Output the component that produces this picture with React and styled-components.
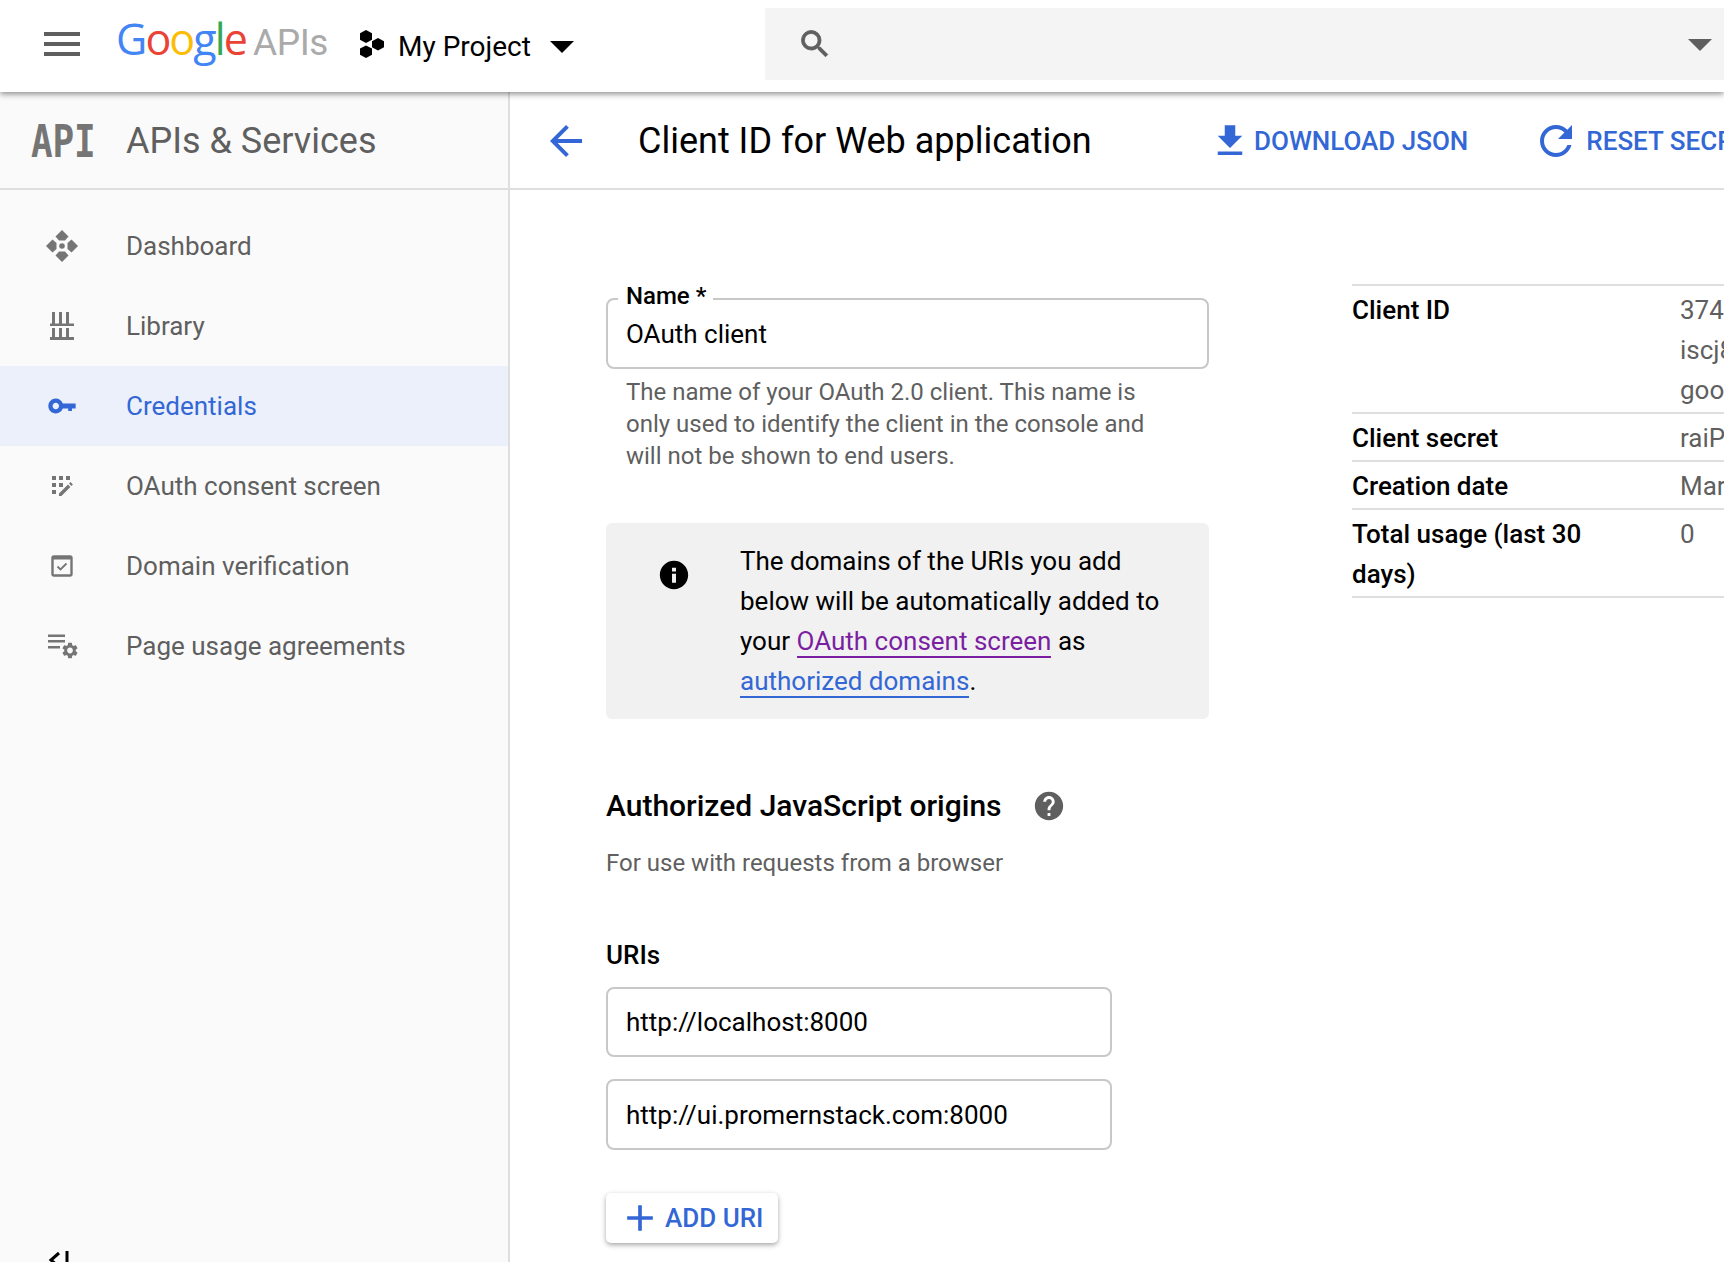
import React from "react"
import styled, { createGlobalStyle } from "styled-components"

const Global = createGlobalStyle`
  html, body {
    margin: 0;
    padding: 0;
    background: #fff;
    overflow: hidden;
  }
  * {
    box-sizing: border-box;
  }
`

const Page = styled.div`
  width: 1724px;
  height: 1262px;
  overflow: hidden;
  display: flex;
  flex-direction: column;
  font-family: Roboto, "Liberation Sans", sans-serif;
  font-size: 26px;
  color: #000;
`

const Header = styled.header`
  height: 92px;
  flex: none;
  display: flex;
  align-items: center;
  background: #fff;
  box-shadow: 0 2px 6px rgba(0, 0, 0, 0.45);
  position: relative;
  z-index: 2;
`

const Burger = styled.div`
  width: 36px;
  margin-left: 44px;
  display: flex;
  flex-direction: column;
  gap: 6px;
  margin-top: -4px;
  span {
    height: 4px;
    background: #5f5f5f;
  }
`

const Logo = styled.div`
  margin-left: 36px;
  margin-top: -15px;
  width: 213px;
  flex: none;
  display: flex;
  align-items: baseline;
  font-family: "Open Sans", sans-serif;
  font-size: 43px;
  letter-spacing: -1.9px;
  white-space: nowrap;
`

const Letter = styled.span`
  color: ${(p) => p.$c};
`

const LogoApis = styled.span`
  margin-left: 7px;
  color: #aaa;
  font-family: Roboto, sans-serif;
  font-weight: 400;
  font-size: 37px;
  letter-spacing: -0.4px;
`

const ProjectPicker = styled.div`
  width: 375px;
  flex: none;
  margin-left: 29px;
  display: flex;
  align-items: center;
  font-size: 28px;
  white-space: nowrap;
  svg {
    flex: none;
    margin-top: -5px;
  }
`

const ProjectName = styled.span`
  margin-left: 12px;
  margin-top: 1px;
`

const Caret = styled.i`
  flex: none;
  width: 0;
  height: 0;
  margin-left: ${(p) => p.$left || 0}px;
  margin-top: 2px;
  border-left: ${(p) => p.$size}px solid transparent;
  border-right: ${(p) => p.$size}px solid transparent;
  border-top: ${(p) => p.$size}px solid ${(p) => p.$color};
`

const Search = styled.div`
  margin-left: 32px;
  flex: 1;
  height: 72px;
  margin-top: -4px;
  background: #f4f4f4;
  display: flex;
  align-items: center;
  padding: 0 12px 0 32px;
  justify-content: space-between;
`

const Body = styled.div`
  flex: 1;
  display: flex;
  min-height: 0;
`

const Sidebar = styled.aside`
  width: 510px;
  flex: none;
  background: #fafafa;
  border-right: 2px solid #dedede;
  display: flex;
  flex-direction: column;
`

const SideTitle = styled.div`
  height: 98px;
  flex: none;
  border-bottom: 2px solid #dedede;
  display: flex;
  align-items: center;
  padding: 2px 0 0 31px;
  font-size: 36px;
  color: #5f5f5f;
`

const ApiMark = styled.span`
  width: 95px;
  flex: none;
  font-family: "DejaVu Sans Mono", monospace;
  font-weight: 700;
  font-size: 36px;
  letter-spacing: -0.2px;
  color: #757575;
  transform: scaleY(1.25);
  transform-origin: center;
`

const Nav = styled.nav`
  padding-top: 16px;
  display: flex;
  flex-direction: column;
`

const NavItem = styled.a`
  height: 80px;
  display: flex;
  align-items: center;
  padding-left: 44px;
  color: ${(p) => (p.$active ? "#3367d6" : "#5f5f5f")};
  background: ${(p) => (p.$active ? "#ebf0fb" : "transparent")};
  svg {
    width: 36px;
    height: 36px;
    flex: none;
    margin-right: 46px;
  }
`

const Collapse = styled.div`
  margin-top: auto;
  margin-bottom: -24px;
  padding-left: 48px;
  height: 36px;
  flex: none;
`

const Main = styled.main`
  flex: 1;
  min-width: 0;
  display: flex;
  flex-direction: column;
  background: #fff;
`

const Toolbar = styled.div`
  height: 98px;
  flex: none;
  border-bottom: 2px solid #dedede;
  display: flex;
  align-items: center;
  padding: 2px 0 0 32px;
  white-space: nowrap;
  overflow: hidden;
`

const Title = styled.h1`
  margin: 0 0 0 48px;
  width: 571px;
  flex: none;
  font-size: 36px;
  font-weight: 400;
`

const Action = styled.a`
  display: flex;
  align-items: center;
  gap: ${(p) => p.$gap}px;
  flex: none;
  margin-right: 64px;
  color: #3367d6;
  font-weight: 500;
`

const Content = styled.div`
  flex: 1;
  display: flex;
  padding-left: 96px;
  min-height: 0;
  overflow: hidden;
`

const Form = styled.div`
  width: 603px;
  flex: none;
  padding-top: 108px;
`

const Field = styled.div`
  position: relative;
`

const Legend = styled.label`
  position: absolute;
  left: 12px;
  top: -17px;
  padding: 0 7px 0 8px;
  background: #fff;
  font-size: 24px;
  font-weight: 500;
  line-height: 30px;
`

const Input = styled.input`
  display: block;
  width: ${(p) => p.$width}px;
  height: ${(p) => p.$height || 70}px;
  padding: 0 18px;
  border: 2px solid #c8c8c8;
  border-radius: 8px;
  font: inherit;
  color: #000;
  background: #fff;
  outline: none;
`

const Helper = styled.p`
  margin: 7px 0 0;
  padding: 0 60px 0 20px;
  font-size: 24px;
  line-height: 32px;
  color: #5f5f5f;
`

const InfoBox = styled.div`
  margin-top: 51px;
  height: 196px;
  background: #f1f1f1;
  border-radius: 6px;
  display: flex;
  padding: 18px 40px 0 51px;
  line-height: 40px;
  svg {
    flex: none;
    margin-top: 17px;
    margin-right: 49px;
  }
`

const Link = styled.a`
  color: ${(p) => (p.$visited ? "#7b1fa2" : "#3367d6")};
  border-bottom: 2px solid currentColor;
`

const SectionHead = styled.div`
  margin-top: 66px;
  display: flex;
  align-items: center;
  gap: 30px;
  height: 42px;
`

const SectionTitle = styled.h2`
  margin: -2px 0 0;
  font-size: 30px;
  font-weight: 500;
`

const SubText = styled.div`
  margin-top: 19px;
  font-size: 24px;
  line-height: 34px;
  color: #5f5f5f;
`

const FieldLabel = styled.div`
  margin-top: 58px;
  font-weight: 500;
  line-height: 34px;
`

const UriList = styled.div`
  margin-top: 15px;
  display: flex;
  flex-direction: column;
  gap: 22px;
`

const AddButton = styled.button`
  margin-top: 43px;
  width: 172px;
  height: 50px;
  display: flex;
  align-items: center;
  padding: 0 0 0 12px;
  gap: 3px;
  border: none;
  border-radius: 5px;
  background: #fff;
  color: #3367d6;
  font: inherit;
  font-weight: 500;
  box-shadow: 0 2px 5px rgba(0, 0, 0, 0.35);
`

const Details = styled.div`
  margin-left: 143px;
  margin-top: 94px;
  flex: none;
  width: 800px;
  align-self: flex-start;
  border-top: 2px solid #dedede;
`

const DetailRow = styled.div`
  display: grid;
  grid-template-columns: 328px 1fr;
  border-bottom: 2px solid #dedede;
  padding: 4px 0 2px;
  line-height: 40px;
`

const DetailLabel = styled.div`
  font-weight: 500;
  padding-right: 60px;
`

const DetailValue = styled.div`
  color: #5f5f5f;
`

const Svg = styled.svg`
  flex: none;
  display: block;
`

const Icon = ({ size = 24, color = "currentColor", d, bold }) => (
  <Svg width={size} height={size} viewBox="0 0 24 24" fill={color} stroke={bold ? color : "none"} strokeWidth={bold || 0}>
    <path d={d} />
  </Svg>
)

const paths = {
  search: "M15.5 14h-.79l-.28-.27A6.471 6.471 0 0 0 16 9.5 6.5 6.5 0 1 0 9.5 16c1.61 0 3.09-.59 4.23-1.57l.27.28v.79l5 4.99L20.49 19l-4.99-5zm-6 0C7.01 14 5 11.99 5 9.5S7.01 5 9.5 5 14 7.01 14 9.5 11.99 14 9.5 14z",
  back: "M20 11H7.83l5.59-5.59L12 4l-8 8 8 8 1.41-1.41L7.83 13H20v-2z",
  download: "M19 9h-4V3H9v6H5l7 7 7-7zM5 18v2h14v-2H5z",
  refresh: "M17.65 6.35C16.2 4.9 14.21 4 12 4c-4.42 0-7.99 3.58-7.99 8s3.57 8 7.99 8c3.73 0 6.84-2.55 7.73-6h-2.08c-.82 2.33-3.04 4-5.65 4-3.31 0-6-2.69-6-6s2.69-6 6-6c1.66 0 3.14.69 4.22 1.78L13 11h7V4l-2.35 2.35z",
  info: "M12 2C6.48 2 2 6.48 2 12s4.48 10 10 10 10-4.48 10-10S17.52 2 12 2zm1.4 15.5h-2.8v-6.4h2.8v6.4zm0-8h-2.8V6.8h2.8v2.7z",
  help: "M12 2C6.48 2 2 6.48 2 12s4.48 10 10 10 10-4.48 10-10S17.52 2 12 2zm1 17h-2v-2h2v2zm2.07-7.75l-.9.92C13.45 12.9 13 13.5 13 15h-2v-.5c0-1.1.45-2.1 1.17-2.83l1.24-1.26c.37-.36.59-.86.59-1.41 0-1.1-.9-2-2-2s-2 .9-2 2H8c0-2.21 1.79-4 4-4s4 1.79 4 4c0 .88-.36 1.68-.93 2.25z",
  add: "M19 13h-6v6h-2v-6H5v-2h6V5h2v6h6v2z",
  gear: "M19.14 12.94c.04-.3.06-.61.06-.94 0-.32-.02-.64-.07-.94l2.03-1.58a.49.49 0 0 0 .12-.61l-1.92-3.32a.488.488 0 0 0-.59-.22l-2.39.96c-.5-.38-1.03-.7-1.62-.94l-.36-2.54a.484.484 0 0 0-.48-.41h-3.84c-.24 0-.43.17-.47.41l-.36 2.54c-.59.24-1.13.57-1.62.94l-2.39-.96c-.22-.08-.47 0-.59.22L2.74 8.87c-.12.21-.08.47.12.61l2.03 1.58c-.05.3-.09.63-.09.94s.02.64.07.94l-2.03 1.58a.49.49 0 0 0-.12.61l1.92 3.32c.12.22.37.29.59.22l2.39-.96c.5.38 1.03.7 1.62.94l.36 2.54c.05.24.24.41.48.41h3.84c.24 0 .44-.17.47-.41l.36-2.54c.59-.24 1.13-.56 1.62-.94l2.39.96c.22.08.47 0 .59-.22l1.92-3.32c.12-.22.07-.47-.12-.61l-2.01-1.58zM12 15.6c-1.98 0-3.6-1.62-3.6-3.6s1.62-3.6 3.6-3.6 3.6 1.62 3.6 3.6-1.62 3.6-3.6 3.6z",
}

const ProjectIcon = () => (
  <svg width="28" height="30" viewBox="0 0 28 30" fill="#000">
    <path d="M8 1l6 3.2v6.6L8 14l-6-3.2V4.2z" />
    <path d="M20 9l6 3.2v6L20 21.4l-6-3.2v-6z" />
    <path d="M8 16.4l6 3.2v6.2L8 29l-6-3.2v-6.2z" />
  </svg>
)

const DashboardIcon = () => (
  <svg viewBox="0 0 36 36" fill="#757575">
    <path d="M18 2l6.5 6.5L21 12.5h-6L11.5 8.5z" />
    <path d="M18 34l-6.5-6.5 3.5-4h6l3.5 4z" />
    <path d="M2 18l6.5-6.5 4 3.5v6l-4 3.5z" />
    <path d="M34 18l-6.5-6.5-4 3.5v6l4 3.5z" />
    <circle cx="18" cy="18" r="2.8" />
  </svg>
)

const LibraryIcon = () => (
  <svg viewBox="0 0 36 36" fill="#757575">
    <path d="M8 4h3v12H8zM15 4h3v12h-3zM22 4h3v12h-3zM6 15.5h24v2.5H6zM8 20h3v9H8zM15 20h3v9h-3zM22 20h3v9h-3zM6 29h24v3H6z" />
  </svg>
)

const KeyIcon = () => (
  <svg viewBox="-2.5 -2.5 29 29" fill="#3367d6">
    <path d="M12.65 10C11.83 7.67 9.61 6 7 6c-3.31 0-6 2.69-6 6s2.69 6 6 6c2.61 0 4.83-1.67 5.65-4H17v2h3v-2h3v-4H12.65zM7 14.6c-1.44 0-2.6-1.16-2.6-2.6S5.56 9.4 7 9.4s2.6 1.16 2.6 2.6-1.16 2.6-2.6 2.6z" />
  </svg>
)

const ConsentIcon = () => (
  <svg viewBox="0 0 36 36" fill="#757575">
    <path d="M8 8h4v4H8zM15 8h4v4h-4zM22 8h4v4h-4zM8 15h4v4H8zM15 15h4v4h-4zM8 22h4v4H8z" />
    <path d="M15 28v-2.4l9-9 2.4 2.4-9 9zM25 15.5l1.5-1.5 2.4 2.4-1.5 1.5z" />
  </svg>
)

const DomainIcon = () => (
  <svg viewBox="0 0 36 36" fill="none" stroke="#757575">
    <rect x="8.5" y="8.5" width="19" height="19" rx="1.5" strokeWidth="2.4" />
    <path d="M8.5 10h19" strokeWidth="3" />
    <path d="M13.5 18.5l3 3 6-6" strokeWidth="1.8" />
  </svg>
)

const UsageIcon = () => (
  <svg viewBox="0 0 36 36" fill="#757575">
    <path d="M4 6.5h17v2.4H4zM4 12h17v2.4H4zM4 18h12v2.4H4z" />
    <g transform="translate(16.4 12.9) scale(0.8)">
      <path d={paths.gear} />
    </g>
  </svg>
)

const CollapseIcon = () => (
  <svg width="36" height="36" viewBox="0 0 36 36" fill="none" stroke="#000" strokeWidth="3">
    <path d="M11 3l-8 7 8 7M19 1v20" />
  </svg>
)

const navItems = [
  { label: "Dashboard", icon: <DashboardIcon /> },
  { label: "Library", icon: <LibraryIcon /> },
  { label: "Credentials", icon: <KeyIcon />, active: true },
  { label: "OAuth consent screen", icon: <ConsentIcon /> },
  { label: "Domain verification", icon: <DomainIcon /> },
  { label: "Page usage agreements", icon: <UsageIcon /> },
]

const details = [
  { label: "Client ID", value: ["374", "iscj8", "goo"] },
  { label: "Client secret", value: ["raiP"] },
  { label: "Creation date", value: ["Mar"] },
  { label: "Total usage (last 30 days)", value: ["0"] },
]

const googleLetters = [
  ["G", "#4285f4"],
  ["o", "#ea4335"],
  ["o", "#fbbc05"],
  ["g", "#4285f4"],
  ["l", "#34a853"],
  ["e", "#ea4335"],
]

export default function App() {
  return (
    <Page>
      <Global />
      <Header>
        <Burger>
          <span />
          <span />
          <span />
        </Burger>
        <Logo>
          {googleLetters.map(([ch, c], i) => (
            <Letter key={i} $c={c}>{ch}</Letter>
          ))}
          <LogoApis>APIs</LogoApis>
        </Logo>
        <ProjectPicker>
          <ProjectIcon />
          <ProjectName>My Project</ProjectName>
          <Caret $size={12} $color="#000" $left={19} />
        </ProjectPicker>
        <Search>
          <Icon size={36} color="#5f5f5f" d={paths.search} bold={0.6} />
          <Caret $size={12} $color="#5f5f5f" />
        </Search>
      </Header>
      <Body>
        <Sidebar>
          <SideTitle>
            <ApiMark>API</ApiMark>
            APIs &amp; Services
          </SideTitle>
          <Nav>
            {navItems.map((item) => (
              <NavItem key={item.label} $active={item.active}>
                {item.icon}
                {item.label}
              </NavItem>
            ))}
          </Nav>
          <Collapse>
            <CollapseIcon />
          </Collapse>
        </Sidebar>
        <Main>
          <Toolbar>
            <Icon size={48} color="#3367d6" d={paths.back} />
            <Title>Client ID for Web application</Title>
            <Action $gap={3}>
              <Icon size={42} d={paths.download} />
              DOWNLOAD JSON
            </Action>
            <Action $gap={6}>
              <Icon size={48} d={paths.refresh} />
              RESET SECRET
            </Action>
          </Toolbar>
          <Content>
            <Form>
              <Field>
                <Legend>Name *</Legend>
                <Input $width={603} $height={71} readOnly value="OAuth client" />
              </Field>
              <Helper>
                The name of your OAuth 2.0 client. This name is only used to identify the client in the console and will not be shown to end users.
              </Helper>
              <InfoBox>
                <Icon size={34} color="#000" d={paths.info} />
                <div>
                  The domains of the URIs you add below will be automatically added to your{" "}
                  <Link $visited>OAuth consent screen</Link> as{" "}
                  <Link>authorized domains</Link>.
                </div>
              </InfoBox>
              <SectionHead>
                <SectionTitle>Authorized JavaScript origins</SectionTitle>
                <Icon size={34} color="#5f5f5f" d={paths.help} />
              </SectionHead>
              <SubText>For use with requests from a browser</SubText>
              <FieldLabel>URIs</FieldLabel>
              <UriList>
                <Input $width={506} readOnly value="http://localhost:8000" />
                <Input $width={506} $height={71} readOnly value="http://ui.promernstack.com:8000" />
              </UriList>
              <AddButton>
                <Icon size={44} d={paths.add} />
                ADD URI
              </AddButton>
            </Form>
            <Details>
              {details.map((row) => (
                <DetailRow key={row.label}>
                  <DetailLabel>{row.label}</DetailLabel>
                  <DetailValue>
                    {row.value.map((line) => (
                      <div key={line}>{line}</div>
                    ))}
                  </DetailValue>
                </DetailRow>
              ))}
            </Details>
          </Content>
        </Main>
      </Body>
    </Page>
  )
}
